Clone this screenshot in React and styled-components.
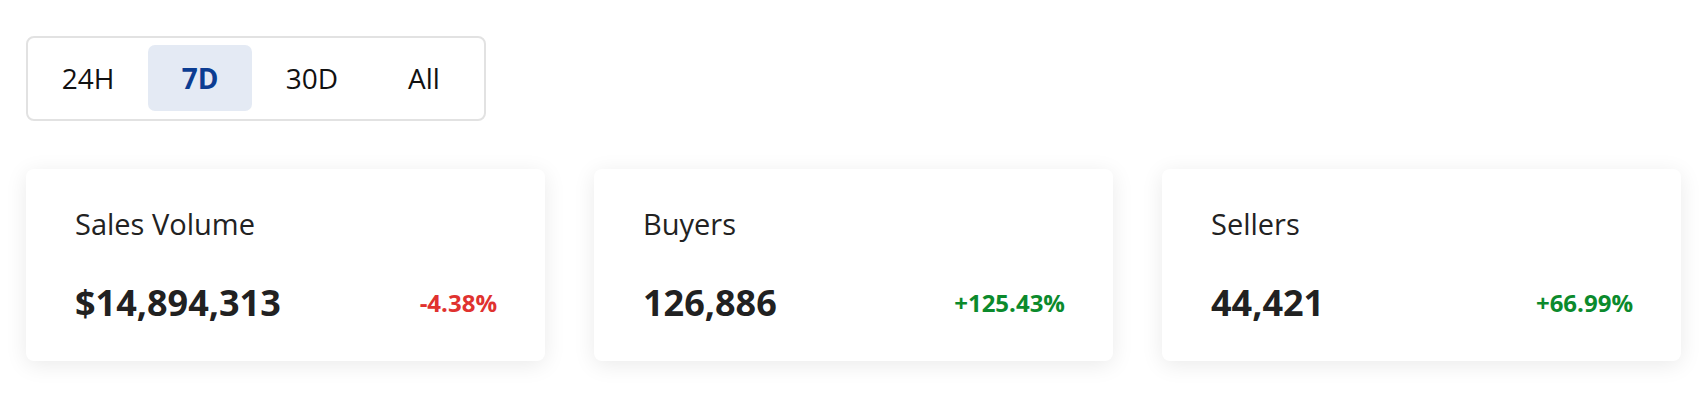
import React, { useState } from 'react'
import styled, { createGlobalStyle } from 'styled-components'

const GlobalStyle = createGlobalStyle`
  body {
    margin: 0;
    background: #ffffff;
    font-family: "Open Sans", "Noto Sans", sans-serif;
  }
`;

const Page = styled.div`
  padding: 36px 27px 40px 26px;
  display: flex;
  flex-direction: column;
  align-items: flex-start;
  gap: 48px;
`;

const TabGroup = styled.div`
  display: flex;
  gap: 8px;
  padding: 7px 8px 8px;
  border: 2px solid #e2e2e2;
  border-radius: 8px;
  background: #fff;
`;

const Tab = styled.button`
  width: 104px;
  height: 66px;
  border: none;
  border-radius: 7px;
  background: ${p => (p.$active ? '#e4eaf4' : 'transparent')};
  color: ${p => (p.$active ? '#0c3d92' : '#111111')};
  font-family: inherit;
  font-size: 28px;
  font-weight: ${p => (p.$active ? 700 : 500)};
  cursor: pointer;
  padding: 0;
`;

const Cards = styled.div`
  align-self: stretch;
  display: grid;
  grid-template-columns: repeat(3, 1fr);
  gap: 49px;
`;

const Card = styled.div`
  background: #fff;
  border-radius: 8px;
  box-shadow: 0 4px 22px rgba(0, 0, 0, 0.085);
  padding: 35px 48px 34px 49px;
  display: flex;
  flex-direction: column;
  gap: 35px;
`;

const Label = styled.div`
  font-size: 29px;
  font-weight: 500;
  color: #222222;
`;

const ValueRow = styled.div`
  display: flex;
  align-items: center;
  justify-content: space-between;
`;

const Value = styled.div`
  font-size: 36px;
  font-weight: 700;
  color: #212121;
`;

const Change = styled.div`
  font-size: 24px;
  font-weight: 700;
  color: ${p => (p.$up ? '#0b8a2c' : '#e0322f')};
`;

const ranges = ['24H', '7D', '30D', 'All'];

const stats = [
  { label: 'Sales Volume', value: '$14,894,313', change: '-4.38%', up: false },
  { label: 'Buyers', value: '126,886', change: '+125.43%', up: true },
  { label: 'Sellers', value: '44,421', change: '+66.99%', up: true },
];

export default function App() {
  const [range, setRange] = useState('7D');

  return (
    <>
      <GlobalStyle />
      <Page>
        <TabGroup>
          {ranges.map(r => (
            <Tab key={r} $active={r === range} onClick={() => setRange(r)}>
              {r}
            </Tab>
          ))}
        </TabGroup>
        <Cards>
          {stats.map(s => (
            <Card key={s.label}>
              <Label>{s.label}</Label>
              <ValueRow>
                <Value>{s.value}</Value>
                <Change $up={s.up}>{s.change}</Change>
              </ValueRow>
            </Card>
          ))}
        </Cards>
      </Page>
    </>
  )
}
